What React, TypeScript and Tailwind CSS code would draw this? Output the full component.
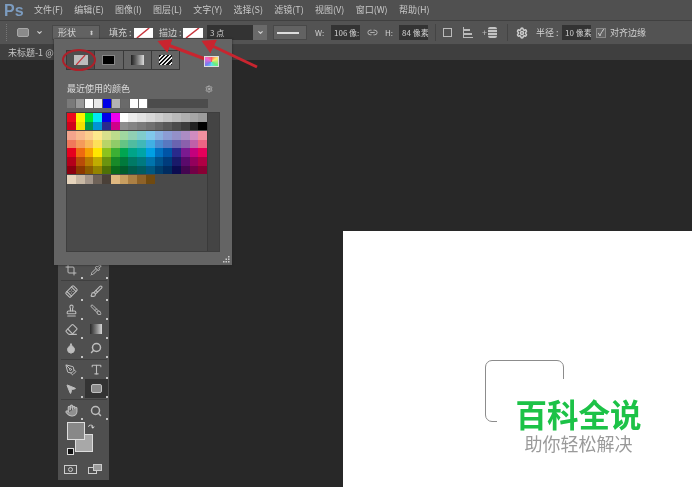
import { useId } from 'react'
import {
  Bandage, Brush, ChevronDown, Crop, Droplet, Eraser, Hand, Link2, MousePointer2, PenTool,
  Pipette, Search, Settings, Stamp, Type,
} from 'lucide-react'

const menus = ['文件(F)', '编辑(E)', '图像(I)', '图层(L)', '文字(Y)', '选择(S)', '滤镜(T)', '视图(V)', '窗口(W)', '帮助(H)']

const recent = ['#7a7a7a', '#9a9a9a', '#ffffff', '#e8e8e8', '#0000e6', '#b4b4b4', '#6a6a6a', '#ffffff', '#ffffff']

const swatchRows = [
  ['#ee0a1c', '#fff200', '#00e632', '#00e8f4', '#0000e6', '#ee00ee', '#ffffff', '#ececec', '#e2e2e2', '#d8d8d8', '#cecece', '#c4c4c4', '#bababa', '#b0b0b0', '#a6a6a6', '#9c9c9c'],
  ['#d0021b', '#f5e000', '#00964e', '#0094d4', '#2a2a8c', '#d0008a', '#8e8e8e', '#848484', '#7a7a7a', '#707070', '#646464', '#585858', '#4a4a4a', '#3c3c3c', '#222222', '#000000'],
  ['#f4a48c', '#f8b88c', '#fbcc8c', '#fde88c', '#d8e08c', '#bcdc8c', '#a0d8a0', '#90d0b4', '#80cccc', '#80c8ec', '#88b0e0', '#8c9cd4', '#9490c8', '#ac8cc4', '#d08cc0', '#f090a0'],
  ['#f0785a', '#f49a5a', '#f8b85a', '#fde05a', '#b8d468', '#90cc68', '#64c484', '#50bca0', '#40b8b8', '#40b0e4', '#4c8cd0', '#5878c0', '#6a64b0', '#8a60ac', '#c060a8', '#ec6484'],
  ['#e6001e', '#ee6a10', '#f5a000', '#ffe600', '#8cc21e', '#3cb034', '#00a651', '#00a488', '#00a4a6', '#00a0e4', '#0070c0', '#0054a6', '#2a2a8c', '#7a1a90', '#c4007c', '#e6005a'],
  ['#b4001a', '#b84c08', '#b87a00', '#c0ac00', '#6a9410', '#188a28', '#007a3c', '#007a66', '#007a80', '#0074ac', '#00548e', '#003c7c', '#1a1a6a', '#5a0a6c', '#94005c', '#b00044'],
  ['#8c0010', '#8c3800', '#8c5c00', '#948400', '#4e7008', '#0a6a1c', '#005c2c', '#005c4c', '#005c60', '#005880', '#003e6c', '#002c60', '#0c0c50', '#440650', '#720046', '#880034'],
]

const browns = ['#e6d4bc', '#c8b8a4', '#a4968a', '#6e6258', '#4a4038', '#e0b880', '#c89e60', '#ac8044', '#8e6228', '#704a10']

function Corner() {
  return <span className="absolute right-0 bottom-0 w-[2px] h-[2px] bg-[#c4c4c4]" />
}

function Tool({ children, active }: { children: React.ReactNode; active?: boolean }) {
  return (
    <div className={`relative w-[23px] h-[19px] flex items-center justify-center text-[#bdbdbd] ${active ? 'bg-[#333333]' : ''}`}>
      {children}
      <Corner />
    </div>
  )
}

function NoColor({ className }: { className: string }) {
  return (
    <div className={`relative overflow-hidden ${className}`}>
      <svg viewBox="0 0 20 10" preserveAspectRatio="none" className="w-full h-full">
        <line x1="3" y1="10" x2="16" y2="0" stroke="#c8343c" strokeWidth="1.5" />
      </svg>
    </div>
  )
}

function Field({ children, className }: { children: React.ReactNode; className: string }) {
  return (
    <div className={`h-[15px] bg-[#333333] flex items-center pl-[3px] text-[8px] text-[#d0d0d0] whitespace-nowrap overflow-hidden ${className}`}>
      {children}
    </div>
  )
}

function Arrows() {
  const id = useId()
  return (
    <svg className="absolute left-0 top-0 pointer-events-none" width="300" height="80" viewBox="0 0 300 80">
      <defs>
        <marker id={id} markerWidth="5" markerHeight="5" refX="3.6" refY="2.5" orient="auto">
          <path d="M0 0 L4.5 2.5 L0 5 Z" fill="#c9252f" />
        </marker>
      </defs>
      <line x1="205" y1="59" x2="160" y2="42" stroke="#c9252f" strokeWidth="3" markerEnd={`url(#${id})`} />
      <line x1="257" y1="67" x2="204" y2="42" stroke="#c9252f" strokeWidth="3" markerEnd={`url(#${id})`} />
      <ellipse cx="79" cy="60" rx="16" ry="10" fill="none" stroke="#ad2029" strokeWidth="2" />
    </svg>
  )
}

function ColorPopup() {
  return (
    <div className="absolute left-[54px] top-[39px] w-[178px] h-[226px] bg-[#646464] shadow-[0_0_2px_#222] pt-[11px] px-[12px]">
      <div className="flex items-center h-[20px]">
        <div className="flex h-[20px] w-[114px] border border-[#3a3a3a]">
          <div className="flex-1 flex items-center justify-center bg-[#4e4e4e] border-r border-[#3a3a3a]">
            <NoColor className="w-[14px] h-[10px] bg-[#bdbdbd]" />
          </div>
          <div className="flex-1 flex items-center justify-center border-r border-[#3a3a3a]">
            <div className="w-[13px] h-[10px] bg-black border border-[#888888]" />
          </div>
          <div className="flex-1 flex items-center justify-center border-r border-[#3a3a3a]">
            <div className="w-[13px] h-[10px] bg-gradient-to-r from-[#222222] to-[#dddddd]" />
          </div>
          <div className="flex-1 flex items-center justify-center">
            <div className="w-[13px] h-[10px] bg-[repeating-linear-gradient(135deg,#111111_0,#111111_1.5px,#e8e8e8_1.5px,#e8e8e8_3px)]" />
          </div>
        </div>
      </div>

      <div className="flex items-center justify-between mt-[13px] h-[12px] pl-px pr-[7px]">
        <span className="text-[9px] text-[#dcdcdc]">最近使用的颜色</span>
        <Settings size={8} className="text-[#cccccc]" />
      </div>

      <div className="flex h-[9px] w-[141px] mt-[4px] ml-px bg-[#4c4c4c]">
        {recent.map((c, i) => (
          <div key={i} className="w-[9px] h-[9px] border-r border-[#646464]" style={{ background: c }} />
        ))}
      </div>

      <div className="flex w-[154px] h-[140px] mt-[4px] bg-[#4a4a4a] border border-[#3e3e3e]">
        <div className="flex-1">
          {swatchRows.map((row, i) => (
            <div key={i} className={`flex ${i === 2 ? 'mt-px' : ''}`}>
              {row.map((c, j) => (
                <div key={j} className="w-[8.75px] h-[8.6px]" style={{ background: c }} />
              ))}
            </div>
          ))}
          <div className="flex mt-px">
            {browns.map((c, j) => (
              <div key={j} className="w-[8.75px] h-[8.6px]" style={{ background: c }} />
            ))}
          </div>
        </div>
        <div className="w-[12px] bg-[#444444] border-l border-[#3a3a3a]" />
      </div>

      <svg className="absolute right-[2px] bottom-[2px] text-[#cccccc]" width="7" height="7" viewBox="0 0 7 7" fill="currentColor">
        <rect x="5" y="0" width="1.5" height="1.5" />
        <rect x="2.5" y="2.5" width="1.5" height="1.5" />
        <rect x="5" y="2.5" width="1.5" height="1.5" />
        <rect x="0" y="5" width="1.5" height="1.5" />
        <rect x="2.5" y="5" width="1.5" height="1.5" />
        <rect x="5" y="5" width="1.5" height="1.5" />
      </svg>
    </div>
  )
}

function Toolbox() {
  return (
    <div className="absolute left-[58px] top-[200px] w-[51px] h-[220px] bg-[#4f4f4f] flex flex-col items-center pt-[60px]">
      <div className="grid grid-cols-2 gap-x-[2px]">
        <Tool><Crop size={12} /></Tool>
        <Tool><Pipette size={12} /></Tool>
      </div>
      <div className="w-[46px] h-px bg-[#3f3f3f] my-[1px]" />
      <div className="grid grid-cols-2 gap-x-[2px]">
        <Tool><Bandage size={13} className="-rotate-45" /></Tool>
        <Tool><Brush size={13} /></Tool>
        <Tool><Stamp size={13} /></Tool>
        <Tool><Brush size={12} className="scale-x-[-1]" /></Tool>
        <Tool><Eraser size={13} /></Tool>
        <Tool><div className="w-[12px] h-[10px] bg-gradient-to-r from-[#2a2a2a] to-[#d8d8d8]" /></Tool>
        <Tool><Droplet size={12} fill="#bdbdbd" /></Tool>
        <Tool><Search size={12} strokeWidth={3} className="scale-x-[-1]" /></Tool>
      </div>
      <div className="w-[46px] h-px bg-[#3f3f3f] my-[1px]" />
      <div className="grid grid-cols-2 gap-x-[2px]">
        <Tool><PenTool size={12} /></Tool>
        <Tool><Type size={13} /></Tool>
        <Tool><MousePointer2 size={12} fill="#bdbdbd" /></Tool>
        <Tool active><div className="w-[11px] h-[9px] rounded-[2px] bg-[#8a8a8a] border border-[#c0c0c0]" /></Tool>
      </div>
      <div className="w-[46px] h-px bg-[#3f3f3f] my-[1px]" />
      <div className="grid grid-cols-2 gap-x-[2px]">
        <Tool><Hand size={13} fill="#8f8f8f" /></Tool>
        <Tool><Search size={12} strokeWidth={3} /></Tool>
      </div>
    </div>
  )
}

export default function App() {
  return (
    <div className="relative w-[692px] h-[487px] overflow-hidden bg-[#282828] blur-[0.4px] font-['Noto_Sans_CJK_SC','Liberation_Sans',sans-serif]">
      <div className="h-[20px] bg-[#505050] flex items-center pl-[4px]">
        <span className="text-[16px] font-bold text-[#7c9cc0] w-[30px] pt-px font-['Liberation_Sans',sans-serif]">Ps</span>
        <div className="flex gap-[11.3px]">
          {menus.map(m => (
            <span key={m} className="text-[9px] text-[#c8c8c8] whitespace-nowrap">{m}</span>
          ))}
        </div>
      </div>

      <div className="h-[25px] bg-[#535353] border-y border-[#404040] flex items-center text-[9px] text-[#d0d0d0] whitespace-nowrap">
        <div className="ml-[6px] w-[2px] h-[17px] border-l border-dotted border-[#777777]" />
        <div className="ml-[9px] w-[12px] h-[9px] rounded-[2px] bg-[#8a8a8a] border border-[#a8a8a8]" />
        <ChevronDown size={7} className="ml-[7px] text-[#cccccc]" strokeWidth={4} />
        <div className="ml-[9px] w-[48px] h-[15px] bg-[#626262] border border-[#484848] flex items-center justify-between px-[5px]">
          <span>形状</span>
          <span className="text-[6px] leading-[6px] text-[#cccccc]">⬍</span>
        </div>
        <span className="ml-[9px] w-[25px]">填充 :</span>
        <NoColor className="w-[19px] h-[10px] bg-white" />
        <span className="ml-[6px] w-[24px]">描边 :</span>
        <NoColor className="w-[20px] h-[10px] bg-white" />
        <Field className="ml-[4px] w-[46px]">3 点</Field>
        <div className="w-[14px] h-[15px] bg-[#6a6a6a] flex items-center justify-center">
          <ChevronDown size={7} strokeWidth={4} />
        </div>
        <div className="ml-[6px] w-[34px] h-[15px] bg-[#626262] border border-[#484848] flex items-center pl-[3px]">
          <div className="w-[22px] h-[2px] bg-[#dddddd]" />
        </div>
        <span className="ml-[8px] w-[16px] text-[8px]">W:</span>
        <Field className="w-[29px]">106 像:</Field>
        <Link2 size={11} className="ml-[7px] text-[#bbbbbb]" />
        <span className="ml-[7px] w-[14px] text-[8px]">H:</span>
        <Field className="w-[29px]">84 像素</Field>
        <div className="ml-[7px] w-px h-[17px] bg-[#444444]" />
        <div className="ml-[7px] w-[9px] h-[9px] border border-[#bbbbbb]" />
        <div className="ml-[11px] w-[10px] h-[11px] border-l border-b border-[#bbbbbb] flex flex-col gap-[2px] pt-[2px]">
          <div className="w-[6px] h-[2px] bg-[#bbbbbb]" />
          <div className="w-[8px] h-[2px] bg-[#bbbbbb]" />
        </div>
        <span className="ml-[9px] text-[9px] leading-none text-[#bbbbbb]">+</span>
        <div className="ml-px w-[9px] h-[11px] bg-[repeating-linear-gradient(180deg,#c4c4c4_0,#c4c4c4_2px,#6a6a6a_2px,#6a6a6a_3px)] rounded-[2px]" />
        <div className="ml-[10px] w-px h-[17px] bg-[#444444]" />
        <Settings size={12} className="ml-[8px] text-[#cccccc]" strokeWidth={3} />
        <span className="ml-[8px] w-[26px]">半径 :</span>
        <Field className="w-[29px]">10 像素</Field>
        <div className="ml-[5px] w-[10px] h-[10px] bg-[#626262] border border-[#888888] flex items-center justify-center text-[9px] leading-none text-[#dddddd]">✓</div>
        <span className="ml-[4px]">对齐边缘</span>
      </div>

      <div className="h-[15px] bg-[#3f3f3f] flex items-center pl-[8px]">
        <span className="text-[9px] text-[#c4c4c4] whitespace-nowrap">未标题-1 @</span>
      </div>

      <div className="flex justify-end pt-[171px]">
        <div className="relative w-[349px] h-[256px] bg-white">
          <div className="absolute left-[142px] top-[129px] w-[79px] h-[62px] rounded-[7px] border border-[#8c8c8c]" />
          <div className="absolute left-[154px] top-[148px] w-[160px] h-[90px] bg-white pt-[16px] pl-[3px] text-center">
            <div className="text-[31.5px] leading-[36px] font-bold text-[#1cc247] whitespace-nowrap">百科全说</div>
            <div className="text-[18px] leading-[22px] mt-px text-[#9a9a9a] whitespace-nowrap">助你轻松解决</div>
          </div>
        </div>
      </div>

      <div className="absolute left-[58px] top-[420px] w-[51px] h-[60px] bg-[#4f4f4f] pt-[1px]">
        <div className="relative h-[38px]">
          <div className="absolute left-[17px] top-[13px] w-[18px] h-[18px] bg-[#a8a8a8] border border-[#dddddd]" />
          <div className="absolute left-[9px] top-[1px] w-[18px] h-[18px] bg-[#888888] border border-[#dddddd]" />
          <div className="absolute left-[9px] top-[27px] w-[7px] h-[7px] bg-[#111111] border border-[#dddddd]" />
          <span className="absolute left-[30px] top-[2px] text-[8px] leading-none text-[#dddddd]">↷</span>
        </div>
        <div className="flex items-center gap-[11px] pl-[6px] mt-[5px]">
          <div className="w-[13px] h-[9px] border border-[#cccccc] flex items-center justify-center">
            <div className="w-[5px] h-[5px] rounded-full bg-[#555555] border border-[#cccccc]" />
          </div>
          <div className="relative w-[15px] h-[11px]">
            <div className="absolute left-0 top-[3px] w-[9px] h-[7px] border border-[#cccccc]" />
            <div className="absolute left-[5px] top-0 w-[9px] h-[7px] bg-[#999999] border border-[#cccccc]" />
          </div>
        </div>
      </div>

      <Toolbox />
      <ColorPopup />
      <Arrows />
      <div className="absolute left-[204px] top-[56px] w-[15px] h-[11px] bg-[conic-gradient(#ff5a5a,#ffe96a,#6af07a,#5ae0f0,#7a7af0,#f06ad0,#ff5a5a)] border border-[#dddddd]" />
    </div>
  )
}
